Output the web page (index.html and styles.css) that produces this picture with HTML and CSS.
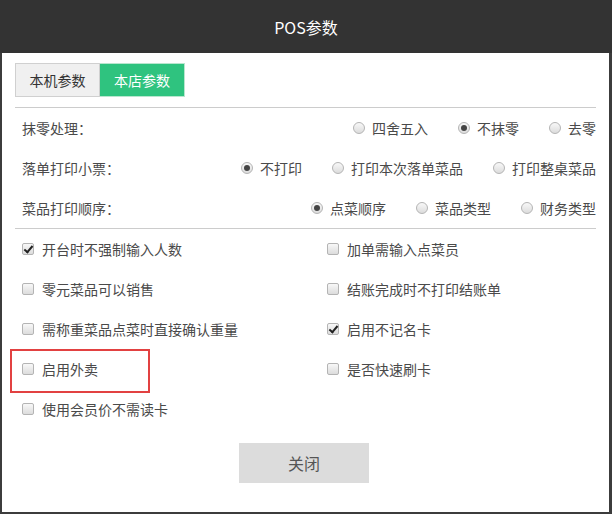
FILE: index.html
```html
<!DOCTYPE html>
<html lang="zh-CN">
<head>
    <meta charset="UTF-8">
    <title>POS参数</title>
    <link rel="stylesheet" href="styles.css">
</head>
<body>
    <div class="dialog">
        <div class="dialog-header">POS参数</div>
        <div class="dialog-body">
            <div class="tabs">
                <div class="tab">本机参数</div>
                <div class="tab active">本店参数</div>
            </div>

            <div class="section">
                <div class="row">
                    <span class="row-label">抹零处理：</span>
                    <div class="options">
                        <label class="opt"><input type="radio" name="moling"> 四舍五入</label>
                        <label class="opt"><input type="radio" name="moling" checked> 不抹零</label>
                        <label class="opt"><input type="radio" name="moling"> 去零</label>
                    </div>
                </div>
                <div class="row">
                    <span class="row-label">落单打印小票：</span>
                    <div class="options">
                        <label class="opt"><input type="radio" name="luodan" checked> 不打印</label>
                        <label class="opt"><input type="radio" name="luodan"> 打印本次落单菜品</label>
                        <label class="opt"><input type="radio" name="luodan"> 打印整桌菜品</label>
                    </div>
                </div>
                <div class="row">
                    <span class="row-label">菜品打印顺序：</span>
                    <div class="options">
                        <label class="opt"><input type="radio" name="shunxu" checked> 点菜顺序</label>
                        <label class="opt"><input type="radio" name="shunxu"> 菜品类型</label>
                        <label class="opt"><input type="radio" name="shunxu"> 财务类型</label>
                    </div>
                </div>
            </div>

            <div class="checks">
                <label class="chk"><input type="checkbox" checked> 开台时不强制输入人数</label>
                <label class="chk"><input type="checkbox"> 加单需输入点菜员</label>
                <label class="chk"><input type="checkbox"> 零元菜品可以销售</label>
                <label class="chk"><input type="checkbox"> 结账完成时不打印结账单</label>
                <label class="chk"><input type="checkbox"> 需称重菜品点菜时直接确认重量</label>
                <label class="chk"><input type="checkbox" checked> 启用不记名卡</label>
                <label class="chk marked"><input type="checkbox"> 启用外卖</label>
                <label class="chk"><input type="checkbox"> 是否快速刷卡</label>
                <label class="chk"><input type="checkbox"> 使用会员价不需读卡</label>
            </div>

            <div class="footer">
                <button type="button" class="btn-close">关闭</button>
            </div>
        </div>
    </div>
</body>
</html>
```

FILE: styles.css
```css
* {
    box-sizing: border-box;
}
body {
    margin: 0;
    font-family: "Noto Sans CJK SC", "Noto Sans", sans-serif;
    font-size: 14px;
    color: #4a4a4a;
    background: #fff;
}
.dialog {
    width: 612px;
    height: 514px;
    border-left: 2px solid #3c3c3c;
    border-right: 3px solid #3c3c3c;
    border-bottom: 2px solid #3c3c3c;
    background: #fff;
}
.dialog-header {
    height: 53px;
    background: #333;
    color: #fff;
    font-size: 16px;
    display: flex;
    align-items: center;
    justify-content: center;
    margin: 0 -3px 0 -2px;
}
.dialog-body {
    padding: 0 13px;
}
.tabs {
    display: flex;
    margin-top: 10px;
    height: 34px;
}
.tab {
    width: 85px;
    display: flex;
    align-items: center;
    justify-content: center;
    background: #f0f0f0;
    border: 1px solid #d0d0d0;
    color: #333;
}
.tab.active {
    background: #2fc37f;
    border-color: #b9e6cf;
    border-left: none;
    color: #fff;
}
.section {
    margin-top: 10px;
    border-top: 1px solid #ccc;
    border-bottom: 1px solid #ccc;
}
.row {
    height: 40px;
    display: flex;
    align-items: center;
    justify-content: space-between;
    padding-left: 7px;
}
.options {
    display: flex;
    gap: 30px;
}
.opt, .chk {
    display: flex;
    align-items: center;
    gap: 7px;
    white-space: nowrap;
}
input[type="radio"], input[type="checkbox"] {
    appearance: none;
    -webkit-appearance: none;
    margin: 0;
    width: 12px;
    height: 12px;
    border: 1px solid #b4b4b4;
    background: linear-gradient(#f8f8f8, #dcdcdc);
    position: relative;
    flex: none;
}
input[type="radio"] {
    border-radius: 50%;
}
input[type="radio"]:checked::after {
    content: "";
    position: absolute;
    left: 2px;
    top: 2px;
    width: 6px;
    height: 6px;
    border-radius: 50%;
    background: #444;
}
input[type="checkbox"] {
    border-radius: 2px;
}
input[type="checkbox"]:checked::after {
    content: "";
    position: absolute;
    left: 3px;
    top: 0;
    width: 3px;
    height: 7px;
    border: solid #222;
    border-width: 0 2px 2px 0;
    transform: rotate(40deg);
}
.checks {
    display: grid;
    grid-template-columns: 305px 1fr;
    grid-auto-rows: 40px;
}
.chk {
    padding-left: 7px;
    gap: 8px;
}
.marked {
    position: relative;
}
.marked::before {
    content: "";
    position: absolute;
    left: -5px;
    top: 0;
    width: 136px;
    height: 40px;
    border: 2px solid #e24141;
}
.footer {
    display: flex;
    justify-content: center;
    margin-top: 14px;
    padding-right: 3px;
}
.btn-close {
    width: 130px;
    height: 40px;
    background: #dcdcdc;
    border: none;
    font-family: inherit;
    font-size: 16px;
    color: #555;
    cursor: pointer;
}
```
